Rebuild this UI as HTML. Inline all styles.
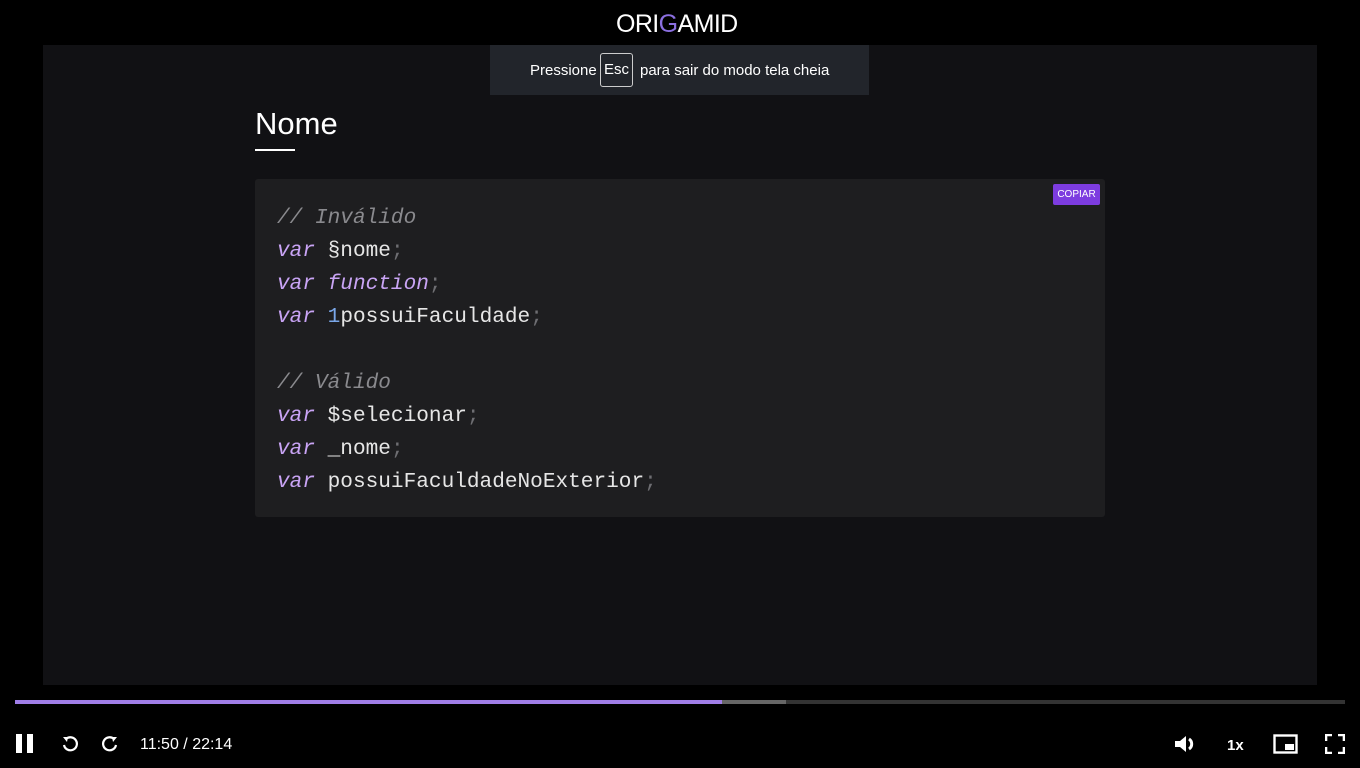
<!DOCTYPE html>
<html><head><meta charset="utf-8"><style>
body{margin:0;width:1360px;height:768px;background:#000;position:relative;overflow:hidden;font-family:"Liberation Sans",sans-serif}
.a{position:absolute}
.slide{left:43px;top:45px;width:1274px;height:640px;background:#111114}
.code{left:255px;top:179px;width:850px;height:338px;background:#1e1e20;border-radius:3px}
.ln{position:absolute;left:277px;font-family:"Liberation Mono",monospace;font-size:21.1px;color:#e6e6e6;white-space:pre;line-height:33px}
.k{color:#c9a4f5;font-style:italic}
.c{color:#8a8a8e;font-style:italic}
.p{color:#6e6e72}
.n{color:#7aa7e8}
</style></head><body>
<div class="a" style="left:616px;top:10px;font-size:25px;color:#fff;letter-spacing:-0.6px;font-weight:400">ORI<span style="color:#8b6fe0">G</span>AMID</div>
<div class="a slide"></div>
<div class="a" style="left:490px;top:45px;width:379px;height:50px;background:#22252b;color:#fff;font-size:15px;line-height:50px"><span style="position:absolute;left:40px;top:1px">Pressione</span><span style="position:absolute;left:110px;top:8px;width:31px;height:32px;border:1px solid #ccc;border-radius:3px;line-height:32px;text-align:center">Esc</span><span style="position:absolute;left:150px;top:1px">para sair do modo tela cheia</span></div>
<div class="a" style="left:255px;top:106px;color:#fff;font-size:31px">Nome</div>
<div class="a" style="left:255px;top:149px;width:40px;height:2px;background:#fff"></div>
<div class="a code"></div>
<div class="a" style="left:1053px;top:184px;width:47px;height:21px;background:#7d3ce0;border-radius:2px;color:#fff;font-size:10px;line-height:21px;text-align:center">COPIAR</div>
<div class="ln" style="top:202px"><span class="c">// Inválido</span></div>
<div class="ln" style="top:235px"><span class="k">var</span> §nome<span class="p">;</span></div>
<div class="ln" style="top:268px"><span class="k">var function</span><span class="p">;</span></div>
<div class="ln" style="top:301px"><span class="k">var</span> <span class="n">1</span>possuiFaculdade<span class="p">;</span></div>
<div class="ln" style="top:367px"><span class="c">// Válido</span></div>
<div class="ln" style="top:400px"><span class="k">var</span> $selecionar<span class="p">;</span></div>
<div class="ln" style="top:433px"><span class="k">var</span> _nome<span class="p">;</span></div>
<div class="ln" style="top:466px"><span class="k">var</span> possuiFaculdadeNoExterior<span class="p">;</span></div>
<div class="a" style="left:15px;top:700px;width:1330px;height:4px;background:#333"></div>
<div class="a" style="left:15px;top:700px;width:771px;height:4px;background:#666"></div>
<div class="a" style="left:15px;top:700px;width:707px;height:4px;background:#a07ee8"></div>
<div class="a" style="left:16px;top:734px;width:6px;height:19px;background:#fff"></div>
<div class="a" style="left:27px;top:734px;width:6px;height:19px;background:#fff"></div>
<svg class="a" style="left:60px;top:734px" width="20" height="20" viewBox="0 0 20 20"><path d="M6 5 A6.5 6.5 0 1 1 4 11" fill="none" stroke="#fff" stroke-width="2.2"/><path d="M3 3 L8 3 L7 8 Z" fill="#fff"/></svg>
<svg class="a" style="left:100px;top:734px" width="20" height="20" viewBox="0 0 20 20"><path d="M14 5 A6.5 6.5 0 1 0 16 11" fill="none" stroke="#fff" stroke-width="2.2"/><path d="M17 3 L12 3 L13 8 Z" fill="#fff"/></svg>
<div class="a" style="left:140px;top:736px;color:#fff;font-size:16px">11:50 / 22:14</div>
<svg class="a" style="left:1174px;top:734px" width="26" height="20" viewBox="0 0 26 20"><path d="M1 7 H6 L12 2 V18 L6 13 H1 Z" fill="#fff"/><path d="M15 5 A6 6 0 0 1 15 15" fill="none" stroke="#fff" stroke-width="3"/></svg>
<div class="a" style="left:1227px;top:737px;color:#fff;font-size:15px;font-weight:bold">1x</div>
<svg class="a" style="left:1273px;top:734px" width="26" height="20" viewBox="0 0 26 20"><rect x="1.5" y="1.5" width="22" height="17" fill="none" stroke="#fff" stroke-width="2.4"/><rect x="12" y="10" width="9" height="6" fill="#fff"/></svg>
<svg class="a" style="left:1325px;top:734px" width="20" height="20" viewBox="0 0 20 20"><path d="M1 7V1H7M13 1H19V7M19 13V19H13M7 19H1V13" fill="none" stroke="#fff" stroke-width="2.6"/></svg>
</body></html>
